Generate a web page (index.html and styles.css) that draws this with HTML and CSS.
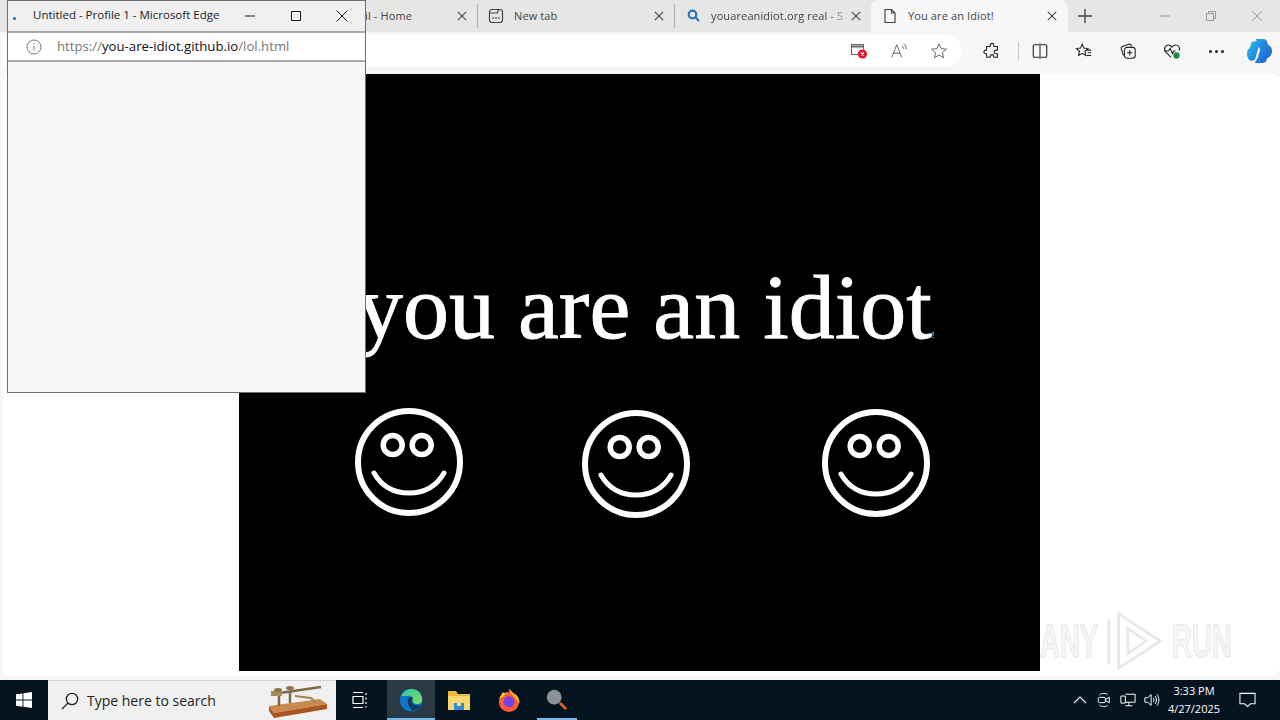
FILE: index.html
```html
<!DOCTYPE html>
<html lang="en">
<head>
<meta charset="utf-8">
<title>You are an Idiot!</title>
<link rel="stylesheet" href="styles.css">
</head>
<body>
<div class="browser">
  <div class="tabstrip">
    <div class="tab tab-home"><span class="tab-title">Gmail - Home</span><svg class="x" viewBox="0 0 12 12"><path d="M1 1l10 10M11 1L1 11"/></svg></div>
    <div class="tab tab-new">
      <svg class="favicon" viewBox="0 0 16 16"><rect x="1.500" y="1.500" width="13" height="13" rx="2.500"/><path d="M1.500 5h8l1-3.500"/><path class="dots" d="M4.500 10h1.500M7.300 10h1.500M10 10h1.500"/></svg>
      <span class="tab-title">New tab</span><svg class="x" viewBox="0 0 12 12"><path d="M1 1l10 10M11 1L1 11"/></svg>
    </div>
    <div class="tab tab-search">
      <svg class="favicon search" viewBox="0 0 16 16"><circle cx="6.500" cy="6.500" r="3.800"/><path d="M9.500 9.500l3.500 3.500"/></svg>
      <span class="tab-title fade">youareanidiot.org real - S</span><svg class="x" viewBox="0 0 12 12"><path d="M1 1l10 10M11 1L1 11"/></svg>
    </div>
    <div class="tab tab-active">
      <svg class="favicon page" viewBox="0 0 16 16"><path d="M3 1.500h6.500l3.500 3.500v9.500H3zM9.500 1.500V5H13"/></svg>
      <span class="tab-title">You are an Idiot!</span><svg class="x" viewBox="0 0 12 12"><path d="M1 1l10 10M11 1L1 11"/></svg>
    </div>
    <svg class="newtab" viewBox="0 0 14 14"><path d="M7 0v14M0 7h14"/></svg>
    <div class="winctl">
      <svg viewBox="0 0 12 12"><path d="M1 6h10"/></svg>
      <svg viewBox="0 0 12 12"><path d="M1.500 3.500h7v7h-7zM3.500 3.500v-2h7v7h-2"/></svg>
      <svg viewBox="0 0 12 12"><path d="M1 1l10 10M11 1L1 11"/></svg>
    </div>
  </div>
  <div class="toolbar">
    <div class="omnibox">
      <svg class="tool popup-blocked" viewBox="0 0 18 18"><path d="M8 12.500H1.500v-10h12v5"/><path class="thick" d="M1.500 4.500h12"/><circle class="red" cx="12.500" cy="12" r="4.500"/><path class="white" d="M11 10.500l3 3M14 10.500l-3 3"/></svg>
      <svg class="tool" viewBox="0 0 20 20"><path d="M2 17L7.500 3 13 17M4 12.500h7"/><path d="M13 4c1.500 1 2 2 2 3.500M15 2c2.500 1.500 3.200 3.300 3 6"/></svg>
      <svg class="tool" viewBox="0 0 20 20"><path d="M10 2l2.400 5.400 5.800.6-4.400 3.900 1.300 5.700L10 14.600 4.900 17.600l1.300-5.700L1.800 8l5.800-.6z"/></svg>
    </div>
    <div class="tools">
      <svg class="tool dark" viewBox="0 0 20 20"><path d="M8 3.500a2 2 0 0 1 4 0V5h4v4h-1.500a2 2 0 0 0 0 4H16v4h-4v-1a2 2 0 0 0-4 0v1H4v-4H3a2 2 0 0 1 0-4h1V5h4z"/></svg>
      <span class="toolsep"></span>
      <svg class="tool dark" viewBox="0 0 20 20"><path d="M9 3H4a1.500 1.500 0 0 0-1.500 1.500v11A1.500 1.500 0 0 0 4 17h5M11 3h5a1.500 1.500 0 0 1 1.500 1.500v11A1.500 1.500 0 0 1 16 17h-5M10 1.500v17"/></svg>
      <svg class="tool dark" viewBox="0 0 20 20"><path d="M8 2.500l1.900 4.300 4.500.5-3.400 3 1 4.600L8 12.600l-4 2.300 1-4.600-3.400-3 4.500-.5zM13 9h5M14 12h4M13 15h5"/></svg>
      <svg class="tool dark" viewBox="0 0 20 20"><path d="M5 15L2.500 7.500a2 2 0 0 1 1.200-2.500L11 2.500a2 2 0 0 1 2.500 1.200l.5 1.300"/><rect x="6" y="6" width="12" height="12" rx="3"/><path d="M12 9v6M9 12h6"/></svg>
      <svg class="tool dark health" viewBox="0 0 20 20"><path d="M9 17L3 11C0 7.500 3 2.500 7 3.500c1.500.4 2.300 1.200 3 2.200.7-1 1.500-1.800 3-2.200 4-1 6.500 3 4.800 6"/><path d="M1.500 10H6l2-3 2.500 6 1.500-3h2"/><circle class="green" cx="15" cy="15" r="3.500"/></svg>
      <span class="more"><i></i><i></i><i></i></span>
      <svg class="copilot" viewBox="0 0 24 24"><defs><linearGradient id="cpa" x1="0" y1="0" x2="1" y2="1"><stop offset="0" stop-color="#35c8c4"/><stop offset=".5" stop-color="#1f9ae6"/><stop offset="1" stop-color="#1d6fe0"/></linearGradient><linearGradient id="cpb" x1="0" y1="0" x2="1" y2="1"><stop offset="0" stop-color="#2aa2e8"/><stop offset="1" stop-color="#1c5cd0"/></linearGradient></defs><path fill="url(#cpb)" d="M9 1h7c2 0 3 1 3.500 2.500l.8 2.700c2.300 1 3.700 3 3.700 5.800 0 3.300-2 6-4.500 6.500l-.8 2.500C18.300 22.300 17 23 15 23H8l3-5 2-7z"/><path fill="url(#cpa)" d="M7.500 3h3.500c1.300 0 2 1 1.500 2.500l-3.800 13c-.5 1.700-1.700 2.500-3.200 2.500-2.700 0-4.800-3-4.500-7 .1-2 .8-3.500 2.500-5l1-3.500C5 4 6 3 7.500 3z"/></svg>
    </div>
  </div>
  <div class="viewport">
    <div class="card">
      <main class="stage">
        <h1 class="headline">you are an idiot<small>!</small></h1>
        <div class="smileys">
          <svg class="smiley s1" viewBox="0 0 108 108"><use href="#face"/></svg>
          <svg class="smiley s2" viewBox="0 0 108 108"><use href="#face"/></svg>
          <svg class="smiley s3" viewBox="0 0 108 108"><use href="#face"/></svg>
        </div>
      </main>
    </div>
    <div class="watermark"><span class="wm-text wm-any">ANY</span><svg viewBox="0 0 64 64"><path d="M3 8v50M14 2l46 30-46 30zM24 18l20 14-20 14z"/></svg><span class="wm-text">RUN</span></div>
  </div>
  <footer class="taskbar">
    <div class="start"><svg viewBox="0 0 16 16"><path d="M0 2.300l6.500-.9v6.200H0zM7.400 1.300L16 0v7.600H7.400zM0 8.500h6.500v6.200L0 13.700zM7.400 8.500H16V16l-8.600-1.200z"/></svg></div>
    <div class="searchbox">
      <svg class="lens" viewBox="0 0 18 18"><circle cx="11" cy="7" r="5.700"/><path d="M7 11l-6 6"/></svg>
      <span>Type here to search</span>
      <svg class="key" viewBox="0 0 62 34"><path fill="#c98a4f" d="M2 22l51-7 7 5-53 9z"/><path fill="#a9561f" d="M2 22l5 7v5l-5-7zM7 29l53-9v5L7 34z"/><path stroke="#7d6a45" stroke-width="2.500" fill="none" d="M6 10l48-7M12 9v13M23 7v12"/><path stroke="#a08350" stroke-width="2" fill="none" d="M28 12l16 2 4 4"/><rect x="4" y="7" width="11" height="5" fill="#a98b5a"/><ellipse cx="11" cy="6" rx="4" ry="2" fill="#8d7448"/><ellipse cx="23" cy="4" rx="4" ry="2" fill="#8d7448"/></svg>
    </div>
    <div class="taskitem"><svg class="taskview" viewBox="0 0 16 16"><path d="M1 .5h10M1 15.500h10M1 4.500h10v7H1zM14 1v2M14 5.500v2M14 10v2M14 14v1.500"/></svg></div>
    <div class="taskitem running active">
      <svg class="appicon" viewBox="0 0 28 28"><defs><linearGradient id="ed" x1="0" y1="0" x2="1" y2="1"><stop offset="0" stop-color="#33c6a0"/><stop offset="1" stop-color="#7fdc6a"/></linearGradient></defs><circle cx="14" cy="14" r="13" fill="#0f77c9"/><path fill="url(#ed)" d="M3 9C6 2 13 0 19 2c6 2 8.500 8 8 13-.3 3-4 4.500-8 3.500-3-.8-4-3-3-5 .5-2-1-4.500-4.500-4.500-3.500 0-6.500 1-8.500 0z"/><path fill="#12395f" d="M10 15c0-3 2.500-5 5.500-4.500 1 2-.5 3-.5 5 0 4 6 6 10 4-2 4-6 7-11 6.500 2 0-4-4-4-11z"/></svg>
    </div>
    <div class="taskitem">
      <svg class="appicon" viewBox="0 0 24 22"><path fill="#e9b83b" d="M1 2h8l2 3h12v16H1z"/><path fill="#f8d775" d="M1 7h22v14H1z"/><path fill="#2a8fd8" d="M7 14h10v7H7z"/><path fill="#f8d775" d="M10 14h4v3h-4z"/></svg>
    </div>
    <div class="taskitem fox">
      <svg class="appicon" viewBox="0 0 26 26"><circle cx="13" cy="15" r="11" fill="#ff5c35"/><path fill="#ffb52e" d="M13 1c5 3 3 5 7 6 3 2 5 6 4 10l-6-8c-2-3-5-4-5-8z"/><path fill="#ffd53d" d="M6 4c0 3-3 5-4 8 1-1 2-2 4-2 1-2 2-3 5-4-2 0-4 0-5-2z"/><circle cx="13" cy="15" r="6" fill="#7542e5"/><path fill="#ff5c35" d="M8 20c4 3 10 2 13-3-3 5-8 8-13 6z"/></svg>
    </div>
    <div class="taskitem running inset">
      <svg class="appicon" viewBox="0 0 26 26"><circle cx="10" cy="10" r="8" fill="#8a9298"/><path d="M17 17l5 5" stroke="#d9622e" stroke-width="3" stroke-linecap="round"/></svg>
    </div>
    <div class="tray">
      <svg class="trayicon chev" viewBox="0 0 14 8"><path d="M1 7l6-6 6 6"/></svg>
      <svg class="trayicon" viewBox="0 0 16 18"><path d="M3 3.500C5 1 10 1 12 3M3 14.500c2 2.500 7 2.500 9 .5"/><rect x="1.500" y="6" width="8" height="6" rx="1.500"/><path d="M10 8l4-2v6l-4-2z"/></svg>
      <svg class="trayicon" viewBox="0 0 18 16"><path d="M6 1.500h11v9H6M1 3.500h5v8H1zM10 10.500v4M6 14.500h8"/></svg>
      <svg class="trayicon" viewBox="0 0 18 16"><path d="M1 5.500h3L8 2v12l-4-3.500H1zM10.500 5.500c1 1.500 1 3.500 0 5M12.500 3.500c2 2.500 2 6.500 0 9M14.500 1.500c3 3.500 3 9.500 0 13"/></svg>
      <div class="clock"><span>3:33 PM</span><span>4/27/2025</span></div>
      <svg class="notify" viewBox="0 0 18 16"><path d="M1 1h16v11h-5l-3 3-3-3H1z"/></svg>
    </div>
  </footer>
</div>

<section class="popup">
  <div class="popup-title">
    <i class="spinner"></i>
    <span class="popup-name">Untitled - Profile 1 - Microsoft Edge</span>
    <svg viewBox="0 0 12 12"><path d="M1 6h10"/></svg>
    <svg viewBox="0 0 12 12"><path d="M1.500 1.500h9v9h-9z"/></svg>
    <svg viewBox="0 0 12 12"><path d="M.5.500l11 11M11.500.500l-11 11"/></svg>
  </div>
  <div class="popup-url">
    <svg class="info" viewBox="0 0 16 16"><circle cx="8" cy="8" r="7"/><path d="M8 7v4.500M8 4.200v1.300"/></svg>
    <span class="url">https://<b>you-are-idiot.github.io</b>/lol.html</span>
  </div>
  <div class="popup-body"></div>
</section>

<svg class="defs" width="0" height="0"><defs><g id="face" fill="none" stroke="#fff"><circle cx="54" cy="54" r="51" stroke-width="6"/><circle cx="37.700" cy="37" r="9.500" stroke-width="5.500"/><circle cx="66.700" cy="37" r="9.500" stroke-width="5.500"/><path d="M19 65c8 14 19 20 35 20s27-6 35-20" stroke-width="5" stroke-linecap="round"/></g></defs></svg>
</body>
</html>
```
FILE: styles.css
```css
* { box-sizing: border-box; }
html, body { margin: 0; height: 100%; overflow: hidden; }
body { font-family: "Open Sans", "Liberation Sans", sans-serif; position: relative; background: #f7f7f7; }
svg { fill: none; stroke: currentColor; display: block; flex: none; }
.defs { position: absolute; }

.browser { display: flex; flex-direction: column; height: 720px; }

.tabstrip { height: 32px; background: #e6e6e6; display: flex; align-items: stretch; color: #333; flex: none; }
.tab { display: flex; align-items: center; font-size: 11px; letter-spacing: .12px; color: #444; position: relative; }
.tab-title { flex: 1; white-space: nowrap; overflow: hidden; margin-top: -2px; }
.tab .x { width: 10px; height: 10px; stroke: #444; stroke-width: 1.300; }
.tab-home { width: 478px; padding: 0 10px 0 300px; border-right: 1px solid #aaa; margin: 4px 0; }
.tab-home .tab-title { text-align: right; padding-right: 45px; }
.tab-new { width: 197px; padding: 0 10px; border-right: 1px solid #aaa; margin: 4px 0; }
.tab-search { width: 196px; padding: 0 10px 0 11px; margin-top: 4px; margin-bottom: 4px; }
.tab-active { width: 197px; padding: 0 11px; background: #f7f7f7; border-radius: 8px 8px 0 0; margin-top: 0; }
.favicon { width: 16px; height: 16px; margin-right: 10px; stroke: #444; stroke-width: 1.200; }
.favicon .dots { stroke-width: 1.400; }
.favicon.search { stroke: #2a74b8; stroke-width: 2.200; margin-right: 9px; }
.fade { -webkit-mask-image: linear-gradient(to right, #000 84%, transparent 100%); mask-image: linear-gradient(to right, #000 84%, transparent 100%); }
.newtab { width: 14px; height: 14px; margin: 9px 0 0 10px; stroke: #444; stroke-width: 1.300; }
.winctl { margin-left: auto; display: flex; gap: 34px; padding: 10px 17px 0 0; color: #999; }
.winctl svg { width: 12px; height: 12px; stroke-width: 1; }

.toolbar { height: 36px; padding-top: 2px; display: flex; align-items: center; flex: none; background: #f7f7f7; }
.omnibox { width: 959px; margin-left: 3px; height: 32px; background: #fff; border-radius: 0 16px 16px 0; display: flex; align-items: center; justify-content: flex-end; gap: 22px; padding-right: 14px; }
.tool { width: 18px; height: 18px; stroke: #666; stroke-width: 1.100; }
.tool.dark { stroke: #222; stroke-width: 1.200; }
.popup-blocked .thick { stroke-width: 2; }
.popup-blocked .red { fill: #e81123; stroke: none; }
.popup-blocked .white { stroke: #fff; stroke-width: 1.200; }
.green { fill: #1a8f3c; stroke: none; }
.tools { display: flex; align-items: center; margin-left: 21px; gap: 26px; }
.toolsep { width: 1px; height: 18px; background: #c4c4c4; margin: 0 -14px 0 -9px; }
.more { display: flex; gap: 3px; width: 18px; justify-content: center; }
.more i { width: 3px; height: 3px; border-radius: 50%; background: #222; }
.copilot { width: 26px; height: 26px; stroke: none; margin-left: -5px; }

.viewport { flex: 1; padding: 6px 0 4px 3px; position: relative; min-height: 0; }
.card { height: 100%; background: #fff; border-radius: 8px; padding-left: 236px; padding-right: 240px; }
.stage { height: 597px; background: #000; overflow: hidden; color: #fff; }
.headline { margin: 0; padding: 180px 0 0 118px; font: 400 92px/106px "Liberation Serif", "Times New Roman", serif; white-space: nowrap; -webkit-text-stroke: .9px #fff; }
.headline small { font-size: 8px; -webkit-text-stroke: 0; }
.smileys { display: flex; padding: 48px 0 0 116px; margin-top: -29px; }
.smiley { width: 108px; height: 108px; }
.s2 { margin: 2px 0 0 119px; }
.s3 { margin: 1px 0 0 132px; }

.watermark { position: absolute; left: 1040px; top: 542px; height: 62px; display: flex; align-items: center; font: 700 46px/1 "Liberation Sans", sans-serif; }
.wm-text { width: 60px; transform: scaleX(.6); transform-origin: left center; white-space: nowrap; color: #f6f6f6; -webkit-text-stroke: 1.500px #eaeaea; }
.wm-any { width: 66px; }
.watermark svg { width: 58px; height: 62px; margin-right: 8px; stroke: #e8e8e8; stroke-width: 3; }

.taskbar { height: 40px; background: #04141f; display: flex; align-items: stretch; flex: none; color: #fff; }
.start { width: 48px; display: flex; align-items: center; justify-content: center; }
.start svg { width: 16px; height: 16px; fill: #fff; stroke: none; }
.searchbox { width: 288px; background: #f0f0f0; border-top: 1px solid #d0d0d0; display: flex; align-items: center; padding-left: 13px; color: #222; font-size: 14px; }
.searchbox span { flex: 1; margin-left: 8px; }
.lens { width: 18px; height: 18px; stroke: #222; stroke-width: 1.300; }
.key { width: 62px; height: 34px; stroke: none; margin-right: 7px; }
.taskitem { width: 48px; display: flex; align-items: center; justify-content: center; position: relative; }
.taskview { width: 16px; height: 16px; stroke: #fff; stroke-width: 1.200; }
.appicon { width: 24px; height: 24px; stroke: none; }
.active { background: #2a3a45; margin-left: 3px; }
.fox { margin-left: 2px; }
.running::after { content: ""; position: absolute; left: 0; right: 0; bottom: 0; height: 2px; background: #76b9ed; }
.inset::after { left: 4px; right: 4px; }
.tray { margin-left: auto; display: flex; align-items: center; padding-right: 24px; }
.trayicon { width: 16px; height: 16px; stroke: #fff; stroke-width: 1.100; margin-right: 8px; }
.chev { height: 8px; width: 14px; margin-right: 9px; margin-left: -1px; }
.clock { width: 66px; margin-left: -7px; display: flex; flex-direction: column; align-items: center; font-size: 11px; line-height: 18px; color: #fff; }
.notify { width: 17px; height: 16px; stroke: #fff; stroke-width: 1.100; margin-left: 12px; }

.popup { position: absolute; left: 7px; top: 0; width: 359px; height: 393px; background: #f7f7f7; border: 1px solid #6e6e6e; display: flex; flex-direction: column; }
.popup-title { height: 30px; background: #f0f0f0; display: flex; align-items: center; color: #1a1a1a; }
.spinner { width: 3px; height: 3px; border-radius: 50%; background: #1c6fb8; margin: 4px 0 0 5px; }
.popup-name { font-size: 11.500px; margin: -4px 0 0 17px; width: 188px; white-space: nowrap; }
.popup-title svg { width: 12px; height: 12px; margin-left: 34px; stroke-width: 1; }
.popup-title svg:nth-of-type(1) { margin-left: 23px; }
.popup-url { height: 31px; background: #fff; border-top: 2px solid #a8a8a8; border-bottom: 2px solid #a8a8a8; display: flex; align-items: center; padding-left: 18px; }
.info { width: 16px; height: 16px; stroke: #777; stroke-width: 1; }
.url { margin: -2px 0 0 15px; font-size: 13.200px; color: #777; }
.url b { font-weight: 400; color: #111; }
.popup-body { flex: 1; }
```
